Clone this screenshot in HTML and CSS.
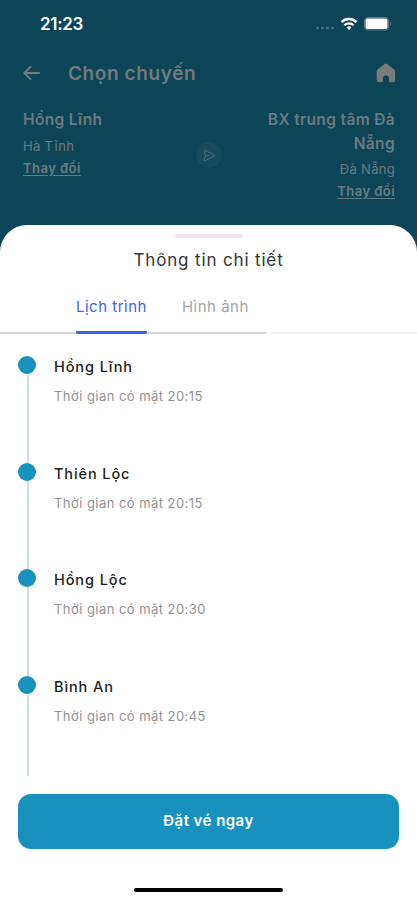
FILE: index.html
```html
<!DOCTYPE html>
<html lang="vi">
<head>
  <meta charset="UTF-8">
  <meta name="viewport" content="width=device-width, initial-scale=1.0">
  <title>Chọn chuyến</title>
  <link rel="stylesheet" href="styles.css">
</head>
<body>
  <div class="screen">
    <!-- Status Bar -->
    <div class="status-bar">
      <span class="time">21:23</span>
      <div class="status-icons">
        <svg class="signal" width="20" height="4" viewBox="0 0 20 4"><path d="M1 2h3M6 2h3M11 2h3M16 2h3" stroke="#3f6a7c" stroke-width="2.4"/></svg>
        <svg class="wifi" width="18" height="14" viewBox="0 0 18 14" fill="none" stroke="#fff">
          <path d="M1.5 5a10.8 10.8 0 0 1 15 0" stroke-width="2.6"/>
          <path d="M4.4 8.2a6.6 6.6 0 0 1 9.2 0" stroke-width="2.2"/>
          <path d="M6.5 10.4a3.6 3.6 0 0 1 5 0L9 13z" fill="#fff" stroke="none"/>
        </svg>
        <svg class="battery" width="28" height="14" viewBox="0 0 28 14">
          <rect x=".5" y=".5" width="24" height="12.5" rx="3.5" fill="none" stroke="#5d8293"/>
          <rect x="1.500" y="1.500" width="22" height="10.500" rx="2" fill="#fff"/>
          <path d="M26 4.5c1.3.6 1.3 4 0 4.6z" fill="#5d8293"/>
        </svg>
      </div>
    </div>

    <!-- Header Section -->
    <div class="header">
      <svg width="18" height="16" viewBox="0 0 18 16" fill="none" stroke="#777b7d" stroke-width="1.8" stroke-linecap="round" stroke-linejoin="round"><path d="M16.2 8H1.5M7.5 1.8L1.3 8l6.2 6.2"/></svg>
      <h1>Chọn chuyến</h1>
      <svg class="home" width="20" height="20" viewBox="0 0 20 20" fill="#7b7b7b"><path d="M8.6 1a2 2 0 0 1 2.6 0l7 5.6c.6.5.9 1.2.9 1.9V17a2.3 2.3 0 0 1-2.3 2.3h-2.3a1.5 1.5 0 0 1-1.5-1.5v-2.3a3 3 0 0 0-6 0v2.3a1.5 1.5 0 0 1-1.5 1.5H3A2.3 2.3 0 0 1 .7 17V8.5c0-.7.3-1.4.9-1.9z"/></svg>
    </div>

    <!-- Route Section -->
    <div class="route">
      <div class="place">
        <h2>Hồng Lĩnh</h2>
        <p>Hà Tĩnh</p>
        <a href="#">Thay đổi</a>
      </div>
      <div class="route-icon">
        <svg width="13" height="13" viewBox="0 0 13 13" fill="none" stroke="#4a6c7a" stroke-linejoin="round" stroke-linecap="round"><path d="M2.3 1.3L12 6.5 2.3 11.7Q.6 11.6 1.2 10L2.8 6.5 1.2 3Q.6 1.4 2.3 1.3zM2.8 6.5H6"/></svg>
      </div>
      <div class="place place-to">
        <h2>BX trung tâm Đà Nẵng</h2>
        <p>Đà Nẵng</p>
        <a href="#">Thay đổi</a>
      </div>
    </div>

    <!-- Detail Sheet -->
    <div class="sheet">
      <div class="handle"></div>
      <h3>Thông tin chi tiết</h3>
      <div class="tabs">
        <div class="tab active">Lịch trình</div>
        <div class="tab">Hình ảnh</div>
      </div>
      <div class="timeline">
        <div class="stop">
          <h4>Hồng Lĩnh</h4>
          <p>Thời gian có mặt 20:15</p>
        </div>
        <div class="stop">
          <h4>Thiên Lộc</h4>
          <p>Thời gian có mặt 20:15</p>
        </div>
        <div class="stop">
          <h4>Hồng Lộc</h4>
          <p>Thời gian có mặt 20:30</p>
        </div>
        <div class="stop">
          <h4>Bình An</h4>
          <p>Thời gian có mặt 20:45</p>
        </div>
      </div>
      <button class="book">Đặt vé ngay</button>
      <div class="home-indicator"></div>
    </div>
  </div>
</body>
</html>
```

FILE: styles.css
```css
* {
  box-sizing: border-box;
}
body {
  margin: 0;
  font-family: Inter, "Noto Sans", sans-serif;
  background-color: #0c4558;
}
h1, h2, h3, h4, p {
  margin: 0;
}
svg {
  display: block;
}
.screen {
  height: 900px;
  display: flex;
  flex-direction: column;
  overflow: hidden;
}
.status-bar {
  height: 48px;
  padding: 0 25px 0 40px;
  display: flex;
  justify-content: space-between;
  align-items: center;
}
.time {
  color: #fff;
  font-size: 17px;
  font-weight: 600;
  letter-spacing: -0.3px;
}
.status-icons {
  display: flex;
  align-items: center;
}
.signal {
  margin: 7px 5px 0 0;
}
.wifi {
  margin-right: 6px;
}
.header {
  height: 50px;
  padding: 0 21px 0 23px;
  display: flex;
  align-items: center;
}
.header h1 {
  margin-left: 27px;
  color: #737a7e;
  font-size: 19px;
  font-weight: 600;
  letter-spacing: 0.6px;
}
.home {
  margin-left: auto;
}
.route {
  height: 127px;
  padding: 10px 22px 0 23px;
  display: grid;
  grid-template-columns: 1fr 26px 1fr;
  color: #6c7a83;
}
.place h2 {
  font-size: 15.5px;
  font-weight: 600;
  line-height: 24px;
  letter-spacing: 0.35px;
}
.place p {
  margin-top: 4px;
  font-size: 13px;
  line-height: 20px;
  letter-spacing: 0.3px;
}
.place a {
  display: block;
  margin-top: 1px;
  color: #6c7a83;
  font-size: 13px;
  font-weight: 600;
  line-height: 22px;
  letter-spacing: 0.45px;
  text-underline-offset: 2px;
}
.place-to {
  margin-left: 24px;
  text-align: right;
}
.place-to p {
  margin-top: 3px;
}
.route-icon {
  width: 26px;
  height: 26px;
  margin-top: 34px;
  display: flex;
  align-items: center;
  justify-content: center;
  border-radius: 50%;
  background-color: #144c5e;
}
.sheet {
  flex: 1;
  display: flex;
  flex-direction: column;
  background-color: #fff;
  border-radius: 27px 27px 0 0;
}
.handle {
  width: 68px;
  height: 4px;
  margin: 9px auto 0;
  border-radius: 2px;
  background-color: #e7e7e7;
}
.sheet h3 {
  margin-top: 10px;
  color: #333;
  font-size: 17px;
  font-weight: 400;
  line-height: 24px;
  text-align: center;
  letter-spacing: 0.85px;
}
.tabs {
  height: 62px;
  padding-left: 76px;
  display: flex;
  gap: 35px;
  background: linear-gradient(90deg, #d2d2d2 266px, #f3f3f3 266px) bottom / 100% 2px no-repeat;
}
.tab {
  padding-top: 24px;
  color: #a5a5a5;
  font-size: 15px;
  line-height: 22px;
  letter-spacing: 0.5px;
}
.tab.active {
  color: #4263e6;
  border-bottom: 3px solid #3f63e0;
  border-radius: 2px;
}
.timeline {
  padding: 21px 18px 0;
}
.stop {
  position: relative;
  height: 106.5px;
  padding-left: 36px;
}
.stop::before {
  content: "";
  position: absolute;
  left: 9px;
  top: 10px;
  width: 1.5px;
  height: 106.5px;
  background-color: #c9dfe8;
}
.stop::after {
  content: "";
  position: absolute;
  left: 0;
  top: 1px;
  width: 18px;
  height: 18px;
  border-radius: 50%;
  background-color: #1892bb;
}
.stop:last-child::before {
  height: 91px;
}
.stop h4 {
  color: #1c1c1c;
  font-size: 14.5px;
  font-weight: 500;
  line-height: 24px;
  letter-spacing: 0.9px;
}
.stop p {
  margin-top: 7px;
  color: #929292;
  font-size: 13px;
  line-height: 20px;
  letter-spacing: 0.45px;
}
.book {
  height: 55px;
  margin: 13px 18px 0;
  padding-bottom: 3px;
  border: none;
  border-radius: 13px;
  background-color: #1892bd;
  color: #fff;
  font-family: inherit;
  font-size: 15px;
  font-weight: 600;
  letter-spacing: 0.45px;
}
.home-indicator {
  width: 149px;
  height: 4px;
  margin: 39px auto 0;
  border-radius: 2px;
  background-color: #000;
}
```
